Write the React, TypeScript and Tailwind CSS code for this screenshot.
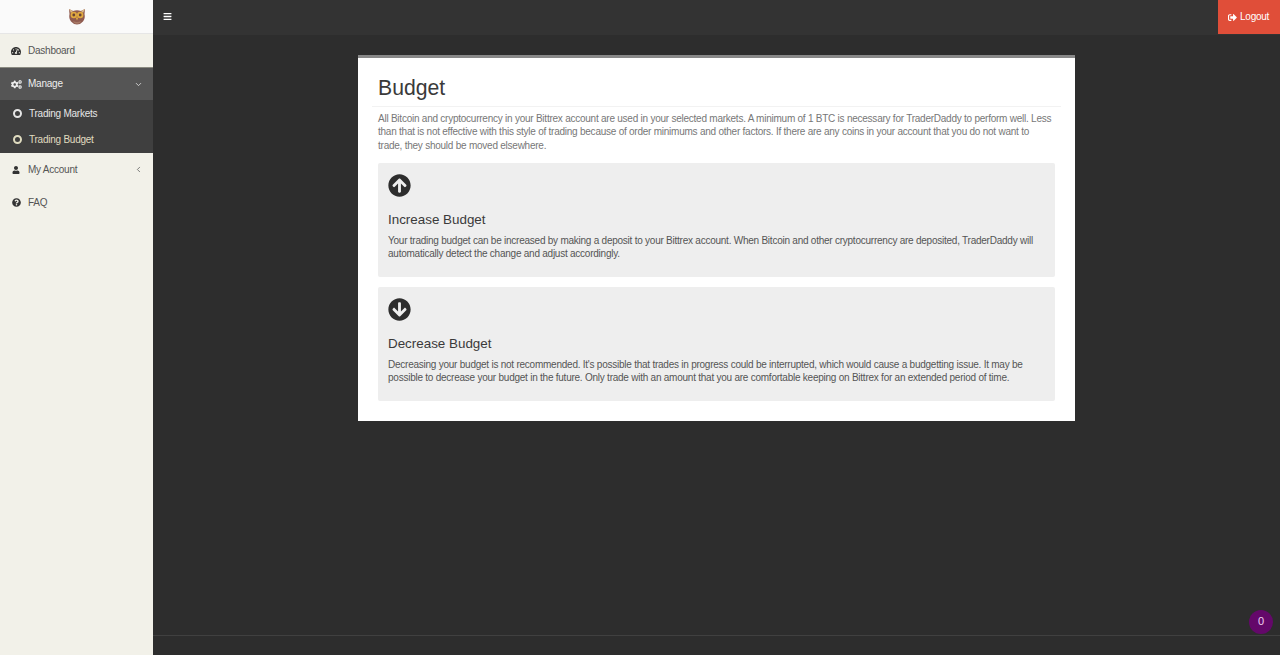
import React from 'react';
import { ChevronDown, ChevronLeft } from 'lucide-react';
import {
  FaArrowCircleDown,
  FaArrowCircleUp,
  FaBars,
  FaCogs,
  FaQuestionCircle,
  FaSignOutAlt,
  FaTachometerAlt,
  FaUser,
} from 'react-icons/fa';

const Owl = () => (
  <svg width="18" height="17" viewBox="0 0 18 17" className="block">
    <path d="M1 1 L5 3 Q9 1.5 13 3 L17 1 L16.5 6 Q17.5 10 15 13.5 Q12.5 16.5 9 16.5 Q5.5 16.5 3 13.5 Q0.5 10 1.5 6 Z" fill="#8f5b50" />
    <path d="M1 1 L5 3 L3 5 Z M17 1 L13 3 L15 5 Z" fill="#d9b98a" />
    <circle cx="5.8" cy="7" r="3.2" fill="#e0a93f" />
    <circle cx="12.2" cy="7" r="3.2" fill="#e0a93f" />
    <circle cx="5.8" cy="7" r="1.4" fill="#6a4436" />
    <circle cx="12.2" cy="7" r="1.4" fill="#6a4436" />
    <path d="M7.8 9.5 L10.2 9.5 L9 12.5 Z" fill="#e8b23e" />
    <path d="M5 13 Q9 15 13 13 L12 15 Q9 16.3 6 15 Z" fill="#a87a66" />
  </svg>
);

const NavItem = ({ icon, label, caret }: { icon: React.ReactNode; label: string; caret?: React.ReactNode }) => (
  <div className="flex h-[33.3px] items-center pl-2 pr-[10px] text-[#555]">
    <span className="flex w-4 justify-center text-[#333]">{icon}</span>
    <span className="ml-1 flex-1">{label}</span>
    {caret}
  </div>
);

const SubItem = ({ label, active }: { label: string; active?: boolean }) => (
  <div className={`flex h-[26.5px] items-center pl-[12.5px] ${active ? 'text-[#e0dcc0]' : 'text-[#e6e6e6]'}`}>
    <span className="h-[9px] w-[9px] rounded-full border-2 border-current" />
    <span className="ml-[7.5px]">{label}</span>
  </div>
);

const Well = ({ icon, title, children }: { icon: React.ReactNode; title: string; children: React.ReactNode }) => (
  <div className="rounded-[2px] bg-[#eeeeee] px-[10px] pt-[11px] pb-[16.5px] text-[#555]">
    <div className="text-[23px] text-[#2d2d2d]">{icon}</div>
    <h3 className="mt-[14px] text-[13.4px] leading-[17px] tracking-normal text-[#3a3a3a]">{title}</h3>
    <p className="mt-[6px]">{children}</p>
  </div>
);

export default function App() {
  return (
    <div
      className="relative flex h-[655px] w-[1280px] overflow-hidden bg-[#2d2d2d] text-[10px] leading-[13.3px] tracking-[-0.24px]"
      style={{ fontFamily: '"Liberation Sans", Arial, sans-serif' }}
    >
      <aside className="w-[153px] shrink-0 bg-[#f2f1e9]">
        <div className="flex h-[34px] items-center justify-center border-b border-[#e6e6e6] bg-[#fafafa]">
          <Owl />
        </div>
        <NavItem icon={<FaTachometerAlt size={10} />} label="Dashboard" />
        <div className="flex h-[32.7px] items-center border-t border-[#8a8a80] bg-[#555555] pl-2 pr-[10px] text-[#eeeeee]">
          <span className="flex w-4 justify-center"><FaCogs size={11} /></span>
          <span className="ml-1 flex-1">Manage</span>
          <ChevronDown size={9} strokeWidth={2} />
        </div>
        <div className="bg-[#3f3f3f]">
          <SubItem label="Trading Markets" />
          <SubItem label="Trading Budget" active />
        </div>
        <NavItem icon={<FaUser size={8} />} label="My Account" caret={<ChevronLeft size={9} strokeWidth={2} />} />
        <NavItem icon={<FaQuestionCircle size={9} />} label="FAQ" />
      </aside>

      <div className="flex min-w-0 flex-1 flex-col">
        <header className="flex h-[35px] items-start justify-between bg-[#333333]">
          <div className="flex h-[32px] items-center pl-[10px] text-white">
            <FaBars size={9} />
          </div>
          <div className="flex h-[34px] w-[62px] items-center gap-[3px] bg-[#e04e39] pl-[10px] text-white">
            <FaSignOutAlt size={9} />
            <span>Logout</span>
          </div>
        </header>

        <main className="flex-1 pt-[20px]">
          <section className="mx-auto w-[717px] border-t-[3px] border-[#888888] bg-white px-5 pb-5">
            <div className="-mx-[6px] border-b border-[#f2f2f2] px-[6px] pt-[15px] pb-[4px]">
              <h1 className="text-[21.2px] leading-[29px] tracking-normal text-[#3a3a3a]">Budget</h1>
            </div>
            <p className="mt-[5px] text-[#777]">
              All Bitcoin and cryptocurrency in your Bittrex account are used in your selected markets. A minimum of 1 BTC is necessary for TraderDaddy to perform well. Less than that is not effective with this style of trading because of order minimums and other factors. If there are any coins in your account that you do not want to trade, they should be moved elsewhere.
            </p>
            <div className="mt-[11px] flex flex-col gap-[10px]">
              <Well icon={<FaArrowCircleUp />} title="Increase Budget">
                Your trading budget can be increased by making a deposit to your Bittrex account. When Bitcoin and other cryptocurrency are deposited, TraderDaddy will automatically detect the change and adjust accordingly.
              </Well>
              <Well icon={<FaArrowCircleDown />} title="Decrease Budget">
                Decreasing your budget is not recommended. It's possible that trades in progress could be interrupted, which would cause a budgetting issue. It may be possible to decrease your budget in the future. Only trade with an amount that you are comfortable keeping on Bittrex for an extended period of time.
              </Well>
            </div>
          </section>
        </main>

        <footer className="h-[20px] border-t border-[#404040]" />
      </div>

      <div className="absolute left-[1249px] top-[610px] flex h-6 w-6 items-center justify-center rounded-full bg-[#64086a] text-[11px] text-[#f0d0f0]">
        0
      </div>
    </div>
  );
}
